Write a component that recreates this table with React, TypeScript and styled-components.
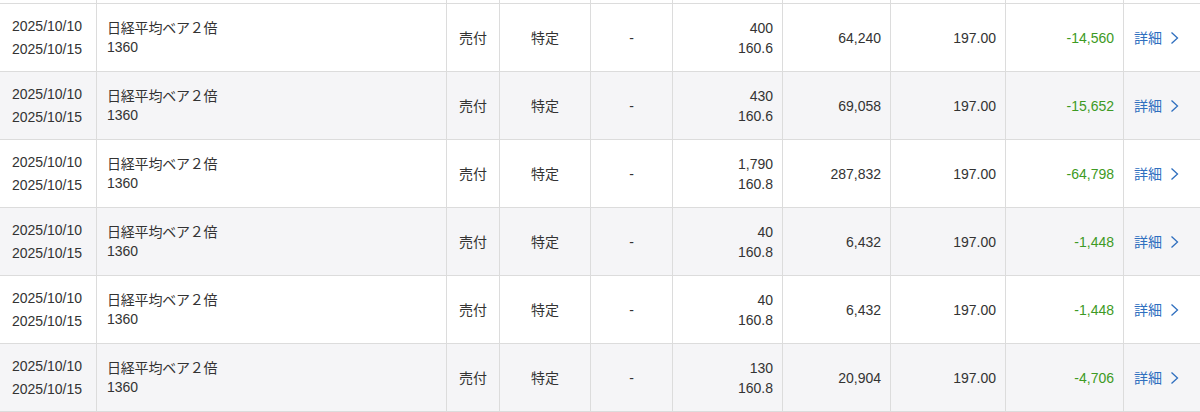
import React from "react";
import styled, { createGlobalStyle } from "styled-components";

const GlobalStyle = createGlobalStyle`
  html, body { margin: 0; padding: 0; background: #fff; }
  body {
    font-family: "Liberation Sans", Arial, "Noto Sans CJK JP", sans-serif;
    font-size: 14px;
    color: #333;
  }
`;

const COLS = "96px 350px 53px 91px 82px 110px 108px 115px 118px 1fr";

const Table = styled.div`
  width: 1200px;
  display: flex;
  flex-direction: column;
  border-bottom: 1px solid #dcdcdc;
`;

const Row = styled.div<{ $alt?: boolean; $spacer?: boolean }>`
  display: grid;
  grid-template-columns: ${COLS};
  height: ${(p) => (p.$spacer ? "3px" : "68px")};
  box-sizing: border-box;
  border-top: ${(p) => (p.$spacer ? "none" : "1px solid #dcdcdc")};
  background: ${(p) => (p.$alt ? "#f5f5f7" : "#fff")};
`;

const Cell = styled.div<{ $align?: "left" | "center" | "right"; $first?: boolean }>`
  box-sizing: border-box;
  border-left: ${(p) => (p.$first ? "none" : "1px solid #dcdcdc")};
  display: flex;
  flex-direction: column;
  justify-content: center;
  align-items: ${(p) =>
    p.$align === "right" ? "flex-end" : p.$align === "center" ? "center" : "flex-start"};
  padding: ${(p) => (p.$align === "right" ? "0 9px 0 0" : p.$align === "center" ? "0" : "0 0 0 10px")};
  white-space: nowrap;
  line-height: 20px;
`;

const DateCell = styled(Cell)`
  padding: 0 0 0 12px;
  line-height: 23px;
`;

const NameCell = styled(Cell)`
  line-height: 19px;
  padding-left: 10px;
  padding-top: 1px;
`;

const Name = styled.span`
  letter-spacing: -0.2px;
`;

const Loss = styled.span`
  color: #3d9a24;
`;

const DetailLink = styled.a`
  display: flex;
  align-items: center;
  gap: 8px;
  color: #2f6fbf;
  text-decoration: none;
  font-size: 14px;
  cursor: pointer;
`;

const Chevron = () => (
  <svg width="9" height="14" viewBox="0 0 9 14" fill="none">
    <path d="M1.5 1.5 L7.5 7 L1.5 12.5" stroke="#2f6fbf" strokeWidth="1.3" />
  </svg>
);

type Item = { qty: string; price: string; amount: string; loss: string };

const items: Item[] = [
  { qty: "400", price: "160.6", amount: "64,240", loss: "-14,560" },
  { qty: "430", price: "160.6", amount: "69,058", loss: "-15,652" },
  { qty: "1,790", price: "160.8", amount: "287,832", loss: "-64,798" },
  { qty: "40", price: "160.8", amount: "6,432", loss: "-1,448" },
  { qty: "40", price: "160.8", amount: "6,432", loss: "-1,448" },
  { qty: "130", price: "160.8", amount: "20,904", loss: "-4,706" },
];

export default function App() {
  return (
    <>
      <GlobalStyle />
      <Table>
        <Row $spacer>
          {Array.from({ length: 10 }).map((_, i) => (
            <Cell key={i} $first={i === 0} />
          ))}
        </Row>
        {items.map((it, i) => (
          <Row key={i} $alt={i % 2 === 1}>
            <DateCell $first>
              <span>2025/10/10</span>
              <span>2025/10/15</span>
            </DateCell>
            <NameCell>
              <Name>日経平均ベア２倍</Name>
              <span>1360</span>
            </NameCell>
            <Cell $align="center">売付</Cell>
            <Cell $align="center">特定</Cell>
            <Cell $align="center">-</Cell>
            <Cell $align="right">
              <span>{it.qty}</span>
              <span>{it.price}</span>
            </Cell>
            <Cell $align="right">{it.amount}</Cell>
            <Cell $align="right">197.00</Cell>
            <Cell $align="right">
              <Loss>{it.loss}</Loss>
            </Cell>
            <Cell>
              <DetailLink>
                詳細
                <Chevron />
              </DetailLink>
            </Cell>
          </Row>
        ))}
      </Table>
    </>
  );
}
